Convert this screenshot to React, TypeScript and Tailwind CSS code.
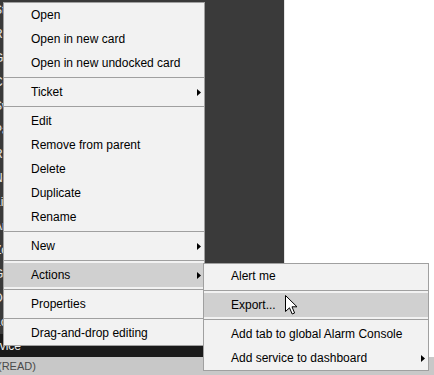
import { Fragment } from "react";

type Entry = { label?: string; sub?: boolean; active?: boolean; sep?: boolean };

const mainItems: Entry[] = [
  { label: "Open" },
  { label: "Open in new card" },
  { label: "Open in new undocked card" },
  { sep: true },
  { label: "Ticket", sub: true },
  { sep: true },
  { label: "Edit" },
  { label: "Remove from parent" },
  { label: "Delete" },
  { label: "Duplicate" },
  { label: "Rename" },
  { sep: true },
  { label: "New", sub: true },
  { sep: true },
  { label: "Actions", sub: true, active: true },
  { sep: true },
  { label: "Properties" },
  { sep: true },
  { label: "Drag-and-drop editing" },
];

const actionItems: Entry[] = [
  { label: "Alert me" },
  { sep: true },
  { label: "Export...", active: true },
  { sep: true },
  { label: "Add tab to global Alarm Console" },
  { label: "Add service to dashboard", sub: true },
];

// rows of the tree behind the menu, only their ends peek out at the left edge
const treeRows = [
  "Station C",
  "Router",
  "Gateway Site",
  "Core",
  "Switch",
  "Panel",
  "Rack",
  "Node.",
  "Link",
  "Area",
  "Zone",
  "Group",
  "Domain",
  "Location",
];

// small black submenu triangle
const Arrow = () => (
  <svg width="4" height="7" viewBox="0 0 4 7" className="shrink-0">
    <path d="M0 0L4 3.5L0 7Z" fill="#000" />
  </svg>
);

const Menu = ({ items, className }: { items: Entry[]; className: string }) => (
  <div className={`absolute border border-[#a0a0a0] bg-[#f2f2f2] ${className}`}>
    {items.map((item, i) =>
      item.sep ? (
        <div key={i} className="h-[5px] flex items-center">
          <div className="h-px w-full bg-[#a0a0a0]" />
        </div>
      ) : (
        <div
          key={i}
          className={`h-[24px] flex items-center pl-[27px] pr-[3px] text-[12px] text-black whitespace-nowrap ${
            item.active ? "bg-[#d0d0d0]" : ""
          }`}
        >
          <span className="flex-1">{item.label}</span>
          {item.sub && <Arrow />}
        </div>
      )
    )}
  </div>
);

const Cursor = () => (
  <svg
    width="13"
    height="20"
    viewBox="0 0 13 20"
    className="absolute left-[285px] top-[295px]"
  >
    <path
      d="M0.5 0.5L0.5 16.5L4.5 12.8L7.2 19L9.6 18L7 11.8L12 11.8Z"
      fill="#fff"
      stroke="#000"
      strokeWidth="1"
      strokeLinejoin="round"
    />
  </svg>
);

const App = () => {
  return (
    <div
      className="relative w-[434px] h-[375px] overflow-hidden bg-white"
      style={{ fontFamily: '"Liberation Sans", Arial, sans-serif' }}
    >
      <div className="flex flex-col h-full">
        <div className="flex h-[357px]">
          <div className="w-[284px] bg-[#3a3a3a] flex flex-col overflow-hidden">
            <div className="mt-[-2px]">
              {treeRows.map((row, i) => (
                <div
                  key={i}
                  className="h-[24px] flex items-center whitespace-nowrap text-[12px] text-[#e8e8e8] -ml-[6px]"
                >
                  {row}
                </div>
              ))}
              <div className="h-[24px] flex items-center whitespace-nowrap text-[12px] text-[#f0f0f0] bg-[#1a1a1a] -ml-[19px]">
                Service
              </div>
            </div>
          </div>
          <div className="w-px bg-[#e4e4e4]" />
          <div className="flex-1 bg-white" />
        </div>
        <div className="h-[18px] bg-[#c8c8c8] flex items-center text-[11px] text-[#4a4a4a] whitespace-nowrap">
          <span className="-ml-[2px]">(READ)</span>
        </div>
      </div>

      <Menu items={mainItems} className="left-[3px] top-[2px] w-[202px]" />
      <Menu items={actionItems} className="left-[203px] top-[263px] w-[226px]" />
      <Cursor />
    </div>
  );
};

export default App;
